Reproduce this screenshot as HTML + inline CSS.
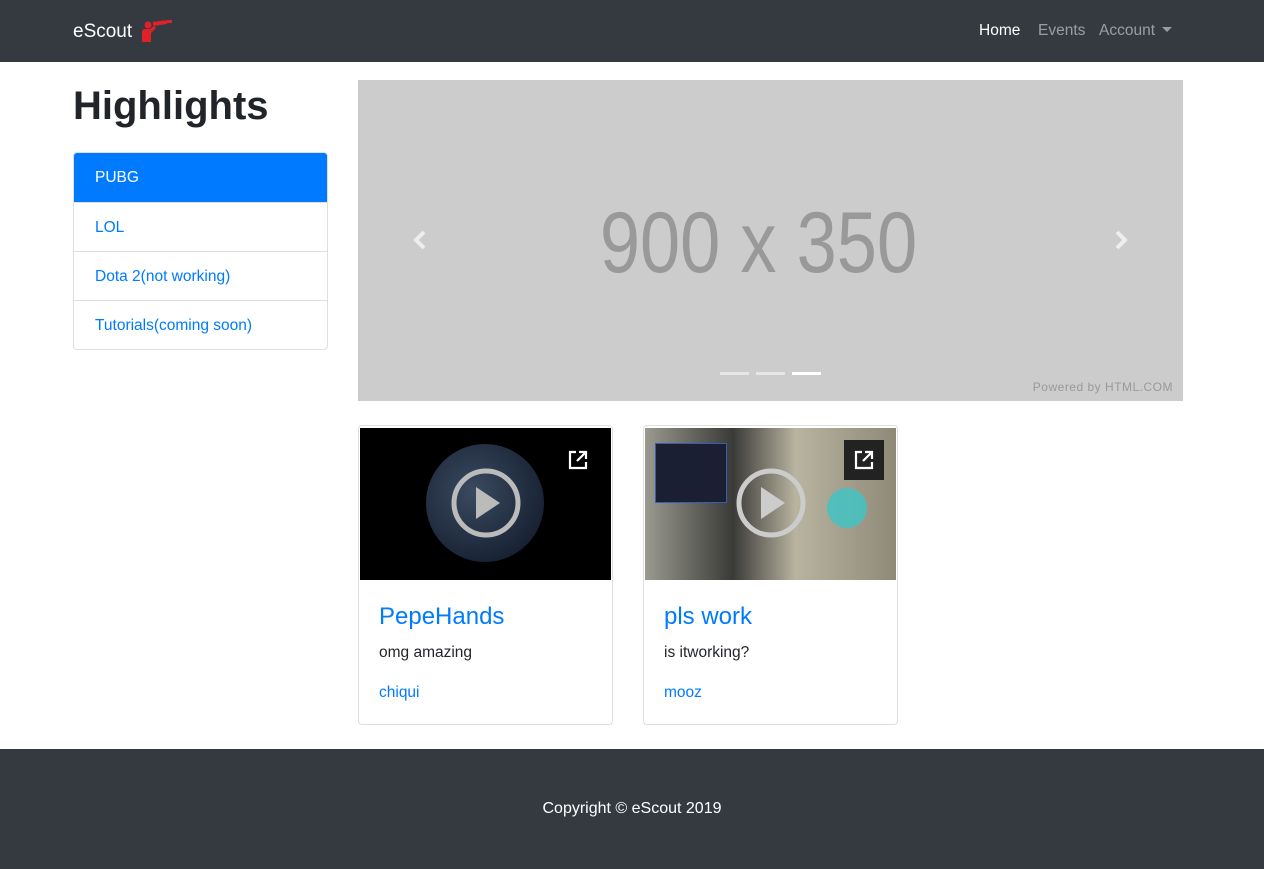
<!DOCTYPE html>
<html><head><style>
*{box-sizing:border-box;margin:0;padding:0}
body{width:1264px;height:869px;font-family:"Liberation Sans",sans-serif;background:#fff;color:#212529;position:relative;overflow:hidden}
.nav{position:absolute;left:0;top:0;width:1264px;height:62px;background:#343a40}
.brand{position:absolute;left:73px;top:18px;color:#fff;font-size:19px}
.nl{position:absolute;top:22px;font-size:15.5px;color:rgba(255,255,255,.5)}
h1{position:absolute;left:73px;top:84px;font-size:40px;font-weight:600}
.list{position:absolute;left:73px;top:152px;width:255px;border:1px solid #dfdfdf;border-radius:4px;overflow:hidden}
.list div{height:49px;border-top:1px solid #dfdfdf;padding:16px 21px;font-size:15.5px;color:#007bff}
.list div:first-child{border-top:none;background:#007bff;color:#fff;height:49px}
.car{position:absolute;left:358px;top:80px;width:825px;height:321px;background:#ccc}
.card{position:absolute;top:425px;width:255px;height:300px;border:1px solid #dfdfdf;border-radius:4px}
.thumb{position:absolute;left:1px;top:2px;width:251px;height:152px;overflow:hidden}
.ct{position:absolute;left:20px;top:177px;font-size:24px;color:#007bff}
.cx{position:absolute;left:20px;top:218px;font-size:15.5px}
.ca{position:absolute;left:20px;top:258px;font-size:15.5px;color:#007bff}
.foot{position:absolute;left:0;top:749px;width:1264px;height:120px;background:#343a40;color:#fff;text-align:center;font-size:16px;padding-top:51px}
</style></head><body>
<div class="nav">
<div class="brand">eScout <svg width="32" height="24" viewBox="0 0 32 24" style="vertical-align:-5px;margin-left:4px"><circle cx="7" cy="7" r="3.5" fill="#e0212a"/><path d="M1 24V14q0-3 3-3h5l4-3 2 2-5 5v9z" fill="#e0212a"/><rect x="12" y="4" width="14" height="4" fill="#e0212a" transform="rotate(-8 12 6)"/><rect x="26" y="2" width="5" height="3" fill="#e0212a"/></svg></div>
<div class="nl" style="left:979px;color:#fff">Home</div>
<div class="nl" style="left:1038px">Events</div>
<div class="nl" style="left:1099px">Account <span style="display:inline-block;border-top:5px solid rgba(255,255,255,.5);border-left:5px solid transparent;border-right:5px solid transparent;vertical-align:3px;margin-left:3px"></span></div>
</div>
<h1>Highlights</h1>
<div class="list"><div>PUBG</div><div>LOL</div><div>Dota 2(not working)</div><div>Tutorials(coming soon)</div></div>
<div class="car">
<div style="position:absolute;left:-12px;width:825px;top:114px;text-align:center;font-size:86px;color:#999;transform:scaleX(.84)">900 x 350</div>
<svg style="position:absolute;left:54px;top:150px" width="16" height="20"><path d="M12 2L4 10l8 8" stroke="#eee" stroke-width="4" fill="none"/></svg>
<svg style="position:absolute;left:755px;top:150px" width="16" height="20"><path d="M4 2l8 8-8 8" stroke="#eee" stroke-width="4" fill="none"/></svg>
<div style="position:absolute;left:362px;top:292px;width:29px;height:3px;background:rgba(255,255,255,.5)"></div>
<div style="position:absolute;left:398px;top:292px;width:29px;height:3px;background:rgba(255,255,255,.5)"></div>
<div style="position:absolute;left:434px;top:292px;width:29px;height:3px;background:#fff"></div>
<div style="position:absolute;right:10px;top:300px;font-size:12px;color:#999;letter-spacing:.5px">Powered by HTML.COM</div>
</div>
<div class="card" style="left:358px">
<div class="thumb" style="background:#000"><div style="position:absolute;left:66px;top:16px;width:118px;height:118px;border-radius:50%;background:radial-gradient(circle at 40% 40%,#3a4a60,#1a2436 70%,#0b111d)"></div>
<svg style="position:absolute;left:90px;top:39px" width="72" height="72"><circle cx="36" cy="36" r="32" stroke="#bbb" stroke-width="5" fill="none"/><path d="M26 20l24 16-24 16z" fill="#bbb"/></svg>
<svg style="position:absolute;left:208px;top:22px" width="20" height="20"><path d="M8 2H2v16h16v-6M11 2h7v7M18 2l-9 9" stroke="#fff" stroke-width="2.2" fill="none"/></svg></div>
<div class="ct">PepeHands</div><div class="cx">omg amazing</div><div class="ca">chiqui</div></div>
<div class="card" style="left:643px">
<div class="thumb" style="background:linear-gradient(90deg,#9a9a90,#3a3a38 35%,#b8b4a0 60%,#8f8a78)"><div style="position:absolute;left:10px;top:15px;width:72px;height:60px;background:#1b1f33;border:1px solid #3a5bb0"></div>
<div style="position:absolute;left:182px;top:60px;width:40px;height:40px;border-radius:50%;background:#3cc6c6;opacity:.8"></div>
<svg style="position:absolute;left:90px;top:39px" width="72" height="72"><circle cx="36" cy="36" r="32" stroke="#ccc" stroke-width="5" fill="none"/><path d="M26 20l24 16-24 16z" fill="#ccc"/></svg>
<div style="position:absolute;left:199px;top:12px;width:40px;height:40px;background:#222"></div>
<svg style="position:absolute;left:209px;top:22px" width="20" height="20"><path d="M8 2H2v16h16v-6M11 2h7v7M18 2l-9 9" stroke="#fff" stroke-width="2.2" fill="none"/></svg></div>
<div class="ct">pls work</div><div class="cx">is itworking?</div><div class="ca">mooz</div></div>
<div class="foot">Copyright © eScout 2019</div>
</body></html>
